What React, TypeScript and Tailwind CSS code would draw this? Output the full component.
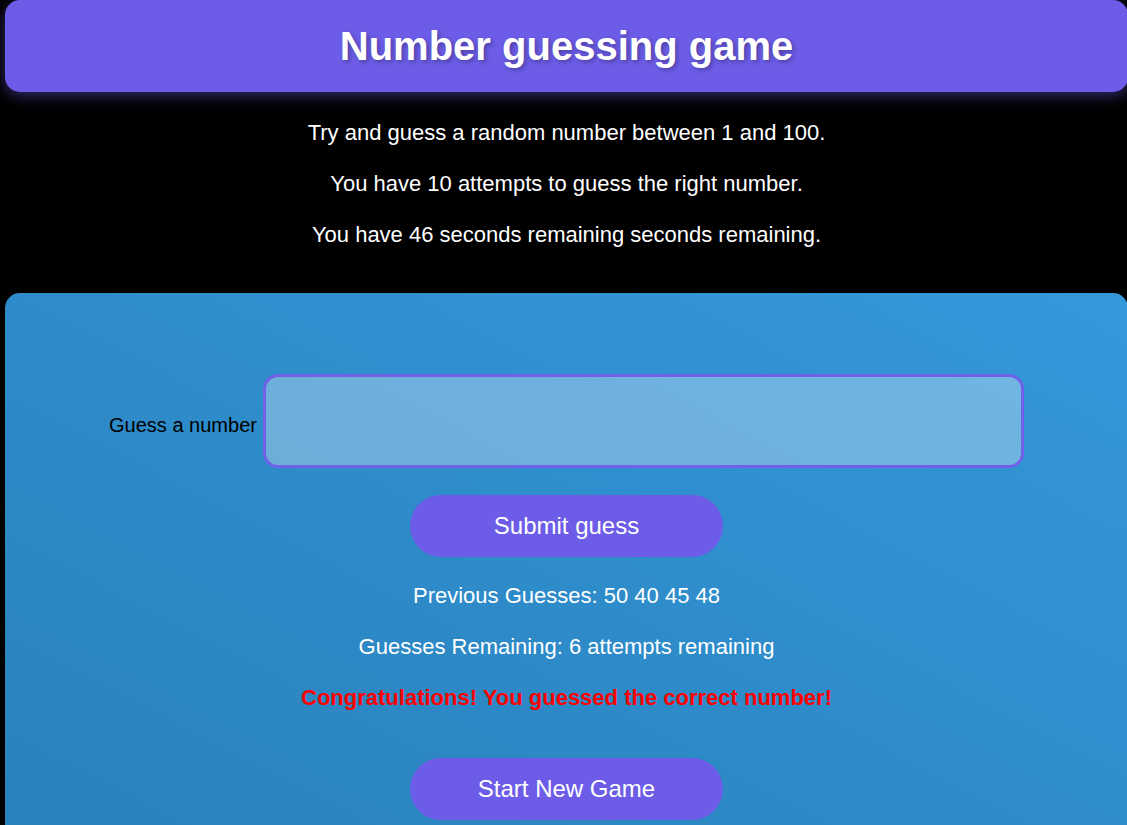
export default function App() {
  return (
    <div className="min-h-[825px] w-full overflow-hidden bg-black font-['Liberation_Sans',Arial,sans-serif]">
      <div className="ml-[5px] w-[1123px]">
        {/* Header */}
        <header className="flex h-[92px] items-center justify-center rounded-[15px] bg-[#6c5ce7] shadow-[0_4px_14px_rgba(108,92,231,0.45)]">
          <h1 className="text-[40px] font-bold text-white [text-shadow:2px_2px_4px_rgba(0,0,0,0.3)]">
            Number guessing game
          </h1>
        </header>

        {/* Intro */}
        <div className="flex flex-col items-center gap-[26px] pt-[28px] text-[22px] leading-[25px] text-white">
          <p>Try and guess a random number between 1 and 100.</p>
          <p>You have 10 attempts to guess the right number.</p>
          <p>You have 46 seconds remaining seconds remaining.</p>
        </div>

        {/* Game panel */}
        <section className="mt-[46px] flex flex-col items-center rounded-[15px] bg-linear-to-tr from-[#2980b9] to-[#3498db] pb-[60px] pt-[81px]">
          <div className="flex items-center gap-[6px]">
            <label className="pt-[8px] text-[20px] text-black">Guess a number</label>
            <input
              type="text"
              className="h-[94px] w-[761px] rounded-[15px] border-[3px] border-[#7360e8] bg-white/30 outline-none"
            />
          </div>
          <button className="mt-[27px] h-[62px] w-[313px] rounded-full bg-[#6c5ce7] text-[24px] text-white">
            Submit guess
          </button>
          <div className="mt-[26px] flex flex-col items-center gap-[26px] text-[22px] leading-[25px] text-white">
            <p>Previous Guesses: 50 40 45 48</p>
            <p>Guesses Remaining: 6 attempts remaining</p>
            <p className="font-bold text-[#ff0000]">Congratulations! You guessed the correct number!</p>
          </div>
          <button className="mt-[48px] h-[62px] w-[313px] rounded-full bg-[#6c5ce7] text-[24px] text-white">
            Start New Game
          </button>
        </section>
      </div>
    </div>
  );
}
